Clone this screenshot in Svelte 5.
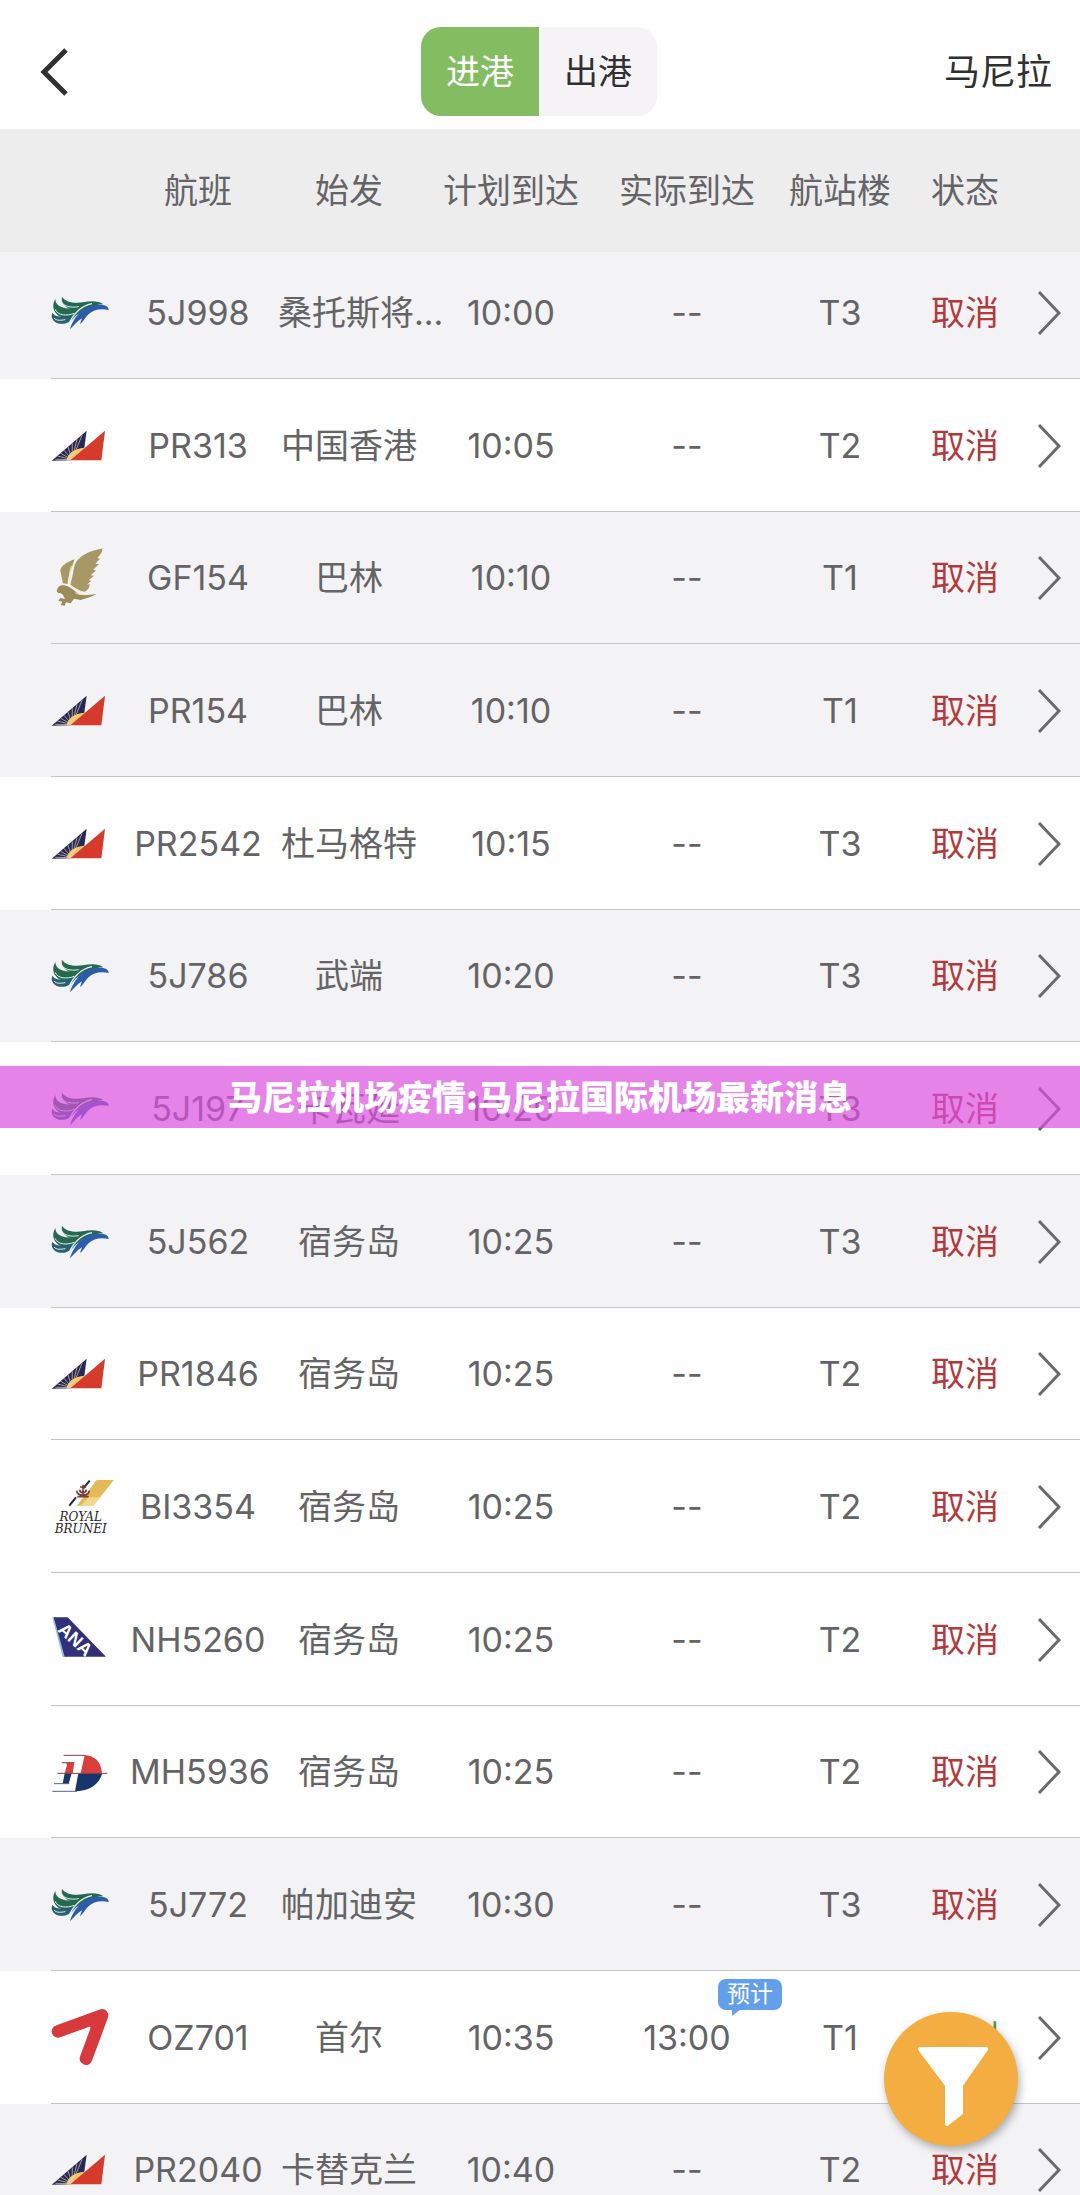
<script>
  const flights = [
    { logo: 'cebu', no: '5J998', from: '桑托斯将...', plan: '10:00', term: 'T3', shade: true },
    { logo: 'pal', no: 'PR313', from: '中国香港', plan: '10:05', term: 'T2' },
    { logo: 'gulf', no: 'GF154', from: '巴林', plan: '10:10', term: 'T1', shade: true },
    { logo: 'pal', no: 'PR154', from: '巴林', plan: '10:10', term: 'T1', shade: true },
    { logo: 'pal', no: 'PR2542', from: '杜马格特', plan: '10:15', term: 'T3' },
    { logo: 'cebu', no: '5J786', from: '武端', plan: '10:20', term: 'T3', shade: true },
    { logo: 'cebu', no: '5J197', from: '卡瓦延', plan: '10:20', term: 'T3' },
    { logo: 'cebu', no: '5J562', from: '宿务岛', plan: '10:25', term: 'T3', shade: true },
    { logo: 'pal', no: 'PR1846', from: '宿务岛', plan: '10:25', term: 'T2' },
    { logo: 'brunei', no: 'BI3354', from: '宿务岛', plan: '10:25', term: 'T2' },
    { logo: 'ana', no: 'NH5260', from: '宿务岛', plan: '10:25', term: 'T2' },
    { logo: 'mas', no: 'MH5936', from: '宿务岛', plan: '10:25', term: 'T2' },
    { logo: 'cebu', no: '5J772', from: '帕加迪安', plan: '10:30', term: 'T3', shade: true },
    { logo: 'asiana', no: 'OZ701', from: '首尔', plan: '10:35', actual: '13:00', term: 'T1', planned: true },
    { logo: 'pal', no: 'PR2040', from: '卡替克兰', plan: '10:40', term: 'T2', shade: true },
  ];
  let tab = $state('in');
</script>

{#snippet airline(name)}
  {#if name === 'cebu'}
    <svg class="logo" viewBox="27 9 180 180" aria-hidden="true">
      <path fill="#25694f" d="M66 50c10 17 36 20 62 17 24-4 46-6 62 6-22-2-38 12-58 17-32 6-72-8-66-40z" />
      <path fill="#25694f" d="M46 57c0 22 22 29 52 29 14 0 24-2 36-2-14 17-32 29-54 30-28 0-52-26-34-57z" />
      <path fill="#2a5f74" d="M37 98c9 13 28 13 46 11 10-1 16-3 26-5-12 16-22 25-38 27-24 3-42-14-34-33z" />
      <path fill="none" stroke="#dff3ee" stroke-width="3" d="M62 60c6 20 30 24 54 20M45 88c10 20 36 20 58 12M42 114c8 9 20 7 34 5" />
      <path fill="#2c5cab" d="M90 148c12-42 44-74 88-74 18 0 28 5 28 16-26-5-46 0-62 14-8 8-14 20-24 29 1-6 4-12 6-18-14 8-24 21-36 33z" />
      <path fill="none" stroke="#e6f4fb" stroke-width="4" d="M84 138c14-34 38-60 72-67" />
    </svg>
  {:else if name === 'pal'}
    <svg class="logo" viewBox="27 3 180 180" aria-hidden="true">
      <path fill="#262a58" d="M35 137 140 47 132 105 92 136z" />
      <path fill="#f6c667" d="M80 136c3-20 20-35 53-38l-1 11-38 27z" />
      <path
        stroke="#f0d3a0"
        stroke-width="2"
        d="M96 134 46 133M96 134 52 123M96 134 62 115M96 134 72 106M96 134 84 96M96 134 97 85M96 134 111 73M96 134 126 61"
      />
      <path fill="#d63a2c" d="M91 136 195 47 184 136z" />
    </svg>
  {:else if name === 'gulf'}
    <svg class="logo" viewBox="57 56 180 180" aria-hidden="true">
      <path
        fill="#a89866"
        d="M222 57c-42 6-78 24-88 50-4 12-4 26-9 43l-4 16c12 10 26 18 42 21 10-3 16-13 16-23l-8 2 13-12-8-1 16-14-10-1 17-15-10-1 18-18-11-1 14-15-8-2c8-8 18-19 14-29z"
      />
      <path fill="#a89866" d="M134 90c-24 8-42 20-43 34l8 38 14 2c0-20 10-42 21-74z" />
      <path
        fill="#9c8c58"
        d="M80 186c2-16 14-21 28-17 24 7 34 30 58 29l34-4c-16 9-32 12-48 18l-20-4-10 14-14-3-4 10-12-2 5-10-12-3 6-8 14 3c-4-12-12-22-20-17z"
      />
      <path fill="none" stroke="#ece7d4" stroke-width="3" d="M124 110c-8 20-2 30-8 52M122 168c12 9 20 15 34 20M136 190c8 6 20 6 32 5" />
    </svg>
  {:else if name === 'brunei'}
    <svg class="logo" viewBox="57 51 180 180" aria-hidden="true">
      <path fill="#e5b957" d="M200 60h52l-62 77h-50l28-34z" />
      <path fill="#f2d78e" d="M176 112h34l-20 25h-38z" />
      <path stroke="#2c2730" stroke-width="6" d="M179 62 160 85M138 112l-20 25" />
      <path
        fill="none"
        stroke="#7a3d38"
        stroke-width="5"
        d="M159 74v37M150 81h18M140 92c2 18 36 18 38 0M149 89c1 12 19 12 20 0M142 110h34"
      />
      <text class="brunei" x="152" y="183" text-anchor="middle">ROYAL</text>
      <text class="brunei" x="152" y="220" text-anchor="middle">BRUNEI</text>
    </svg>
  {:else if name === 'ana'}
    <svg class="logo" viewBox="57 30 180 180" aria-hidden="true">
      <path fill="#8dbbe8" d="M67 52h10l30 119h-9z" />
      <path fill="#30317a" d="M71 52h42l115 118H104z" />
      <text class="ana" transform="translate(81 92) rotate(43)">ANA</text>
    </svg>
  {:else if name === 'mas'}
    <svg class="logo" viewBox="57 427 180 180" aria-hidden="true">
      <path fill="#d9403b" d="M164 467c30 0 50 20 52 54h-64zM108 489h25l-5 32h-24l7-25z" />
      <path fill="#17366c" d="M145 521h72c-10 34-38 53-82 54zM104 521h21l-9 31H98z" />
      <path fill="none" stroke="#8d3b48" stroke-width="3" d="M101 467h66M95 489h38M82 521h150" />
      <path fill="none" stroke="#5a668c" stroke-width="3" d="M72 552h46M67 575h74" />
    </svg>
  {:else}
    <svg class="logo" viewBox="57 84 180 180" aria-hidden="true">
      <path fill="none" stroke="#d8393c" stroke-width="38" stroke-linecap="round" stroke-linejoin="round" d="M84 154 216 106 168 236" />
      <path fill="#d8393c" d="M150 150 216 106 190 170 180 138z" />
    </svg>
  {/if}
{/snippet}

<main class="page">
  <header class="nav">
    <button class="back" aria-label="返回">
      <svg viewBox="0 0 30 50" aria-hidden="true"><path d="M26 3 4 25l22 22" /></svg>
    </button>
    <div class="tabs">
      <button class:active={tab === 'in'} aria-pressed={tab === 'in'} onclick={() => (tab = 'in')}>进港</button>
      <button class:active={tab === 'out'} aria-pressed={tab === 'out'} onclick={() => (tab = 'out')}>出港</button>
    </div>
    <button class="city">马尼拉</button>
  </header>

  <table>
    <colgroup>
      <col class="c-logo" /><col class="c-no" /><col class="c-from" /><col class="c-plan" />
      <col class="c-actual" /><col class="c-term" /><col class="c-status" /><col class="c-go" />
    </colgroup>
    <thead>
      <tr>
        <th></th><th>航班</th><th>始发</th><th>计划到达</th><th>实际到达</th><th>航站楼</th><th>状态</th><th></th>
      </tr>
    </thead>
    <tbody>
      {#each flights as f (f.no)}
        <tr class:shade={f.shade}>
          <td class="logo-cell">{@render airline(f.logo)}</td>
          <td>{f.no}</td>
          <td><div class="from">{f.from}</div></td>
          <td>{f.plan}</td>
          <td class="actual">{f.actual ?? '--'}{#if f.actual}<span class="badge">预计</span>{/if}</td>
          <td>{f.term}</td>
          <td class="status" class:planned={f.planned}>{f.planned ? '计划' : '取消'}</td>
          <td class="go">
            <button aria-label={`${f.no} 详情`}>
              <svg viewBox="0 0 24 44" aria-hidden="true"><path d="M2 1 22 22 2 43" /></svg>
            </button>
          </td>
        </tr>
      {/each}
    </tbody>
  </table>

  <h1 class="banner">马尼拉机场疫情:马尼拉国际机场最新消息</h1>

  <button class="filter" aria-label="筛选">
    <svg viewBox="0 0 72 80" aria-hidden="true">
      <path d="M3 2h66L44 38v28L30 77V38z" />
    </svg>
  </button>
</main>

<style>
  :global(body) {
    margin: 0;
    background: #fff;
  }
  .page {
    position: relative;
    height: 100vh;
    overflow: hidden;
    background: #fefefe;
    color: #646466;
    font-family: Inter, 'Noto Sans CJK SC', sans-serif;
    font-size: 34px;
    line-height: 48px;
  }
  button {
    padding: 0;
    border: 0;
    background: none;
    color: inherit;
    font: inherit;
    cursor: pointer;
  }
  svg {
    display: block;
  }
  .nav {
    display: grid;
    grid-template-columns: 1fr auto 1fr;
    align-items: center;
    box-sizing: border-box;
    height: 129px;
    padding: 14px 28px 0 40px;
    color: #303032;
  }
  .back {
    justify-self: start;
  }
  .back svg {
    width: 30px;
    height: 50px;
    fill: none;
    stroke: #303032;
    stroke-width: 5;
  }
  .tabs {
    display: flex;
    margin-left: -14px;
    border-radius: 20px;
    overflow: hidden;
    background: #f5f3f5;
  }
  .tabs button {
    width: 118px;
    height: 89px;
  }
  .tabs .active {
    background: #84bc61;
    color: #fff;
  }
  .city {
    justify-self: end;
    font-size: 36px;
  }
  table {
    width: 100%;
    table-layout: fixed;
    border-collapse: collapse;
    text-align: center;
  }
  .c-logo {
    width: 130px;
  }
  .c-no {
    width: 136px;
  }
  .c-from {
    width: 166px;
  }
  .c-plan {
    width: 158px;
  }
  .c-actual {
    width: 194px;
  }
  .c-term {
    width: 112px;
  }
  .c-status {
    width: 138px;
  }
  .c-go {
    width: 46px;
  }
  th,
  td {
    padding: 0;
    font-weight: 400;
    white-space: nowrap;
  }
  thead tr {
    height: 123px;
    background: #eeedee;
  }
  tbody tr {
    position: relative;
    height: 133px;
  }
  tbody tr:nth-child(3n) {
    height: 132px;
  }
  tbody tr:first-child {
    height: 127px;
  }
  tbody tr:first-child td {
    padding-bottom: 5px;
  }
  tbody tr::after {
    content: '';
    position: absolute;
    left: 51px;
    right: 0;
    bottom: 0;
    height: 1px;
    background: #c6c6c9;
  }
  .shade {
    background: #f3f2f4;
  }
  .logo-cell {
    padding-left: 49px;
  }
  .logo {
    width: 60px;
    height: 60px;
    overflow: visible;
  }
  .brunei {
    font: italic 400 36px 'DejaVu Serif', serif;
    fill: #2a272c;
  }
  .ana {
    font: 700 54px 'Liberation Sans', sans-serif;
    fill: #fff;
  }
  .from {
    display: flex;
    justify-content: safe center;
    margin: 0 12px;
  }
  .actual {
    position: relative;
  }
  .badge {
    position: absolute;
    top: 8px;
    left: 128px;
    width: 64px;
    border-radius: 8px;
    background: #649fec;
    color: #fff;
    font-size: 23px;
    line-height: 31px;
  }
  .badge::after {
    content: '';
    position: absolute;
    top: 30px;
    left: 14px;
    border-top: 7px solid #649fec;
    border-right: 9px solid transparent;
  }
  .status {
    color: #b23a3c;
  }
  .status.planned {
    color: #4f9a4c;
  }
  .go button {
    display: block;
    margin-left: 3px;
  }
  .go svg {
    width: 24px;
    height: 44px;
    fill: none;
    stroke: #6a6a6c;
    stroke-width: 3;
  }
  .banner {
    position: absolute;
    top: 50%;
    left: 0;
    right: 0;
    margin: -32px 0 0;
    padding-bottom: 2px;
    background: rgba(218, 78, 222, 0.7);
    color: #fff;
    font: 900 34px/60px 'Noto Sans CJK SC', sans-serif;
    text-align: center;
  }
  .filter {
    position: absolute;
    right: 62px;
    bottom: 49px;
    display: grid;
    place-items: center;
    width: 134px;
    height: 134px;
    border-radius: 50%;
    background: #f4ad40;
    box-shadow: 2px 4px 8px rgba(0, 0, 0, 0.3);
  }
  .filter svg {
    width: 72px;
    height: 80px;
    margin: 16px 0 0 4px;
    fill: #fff;
    stroke: #fff;
    stroke-width: 4;
    stroke-linejoin: round;
  }
</style>
